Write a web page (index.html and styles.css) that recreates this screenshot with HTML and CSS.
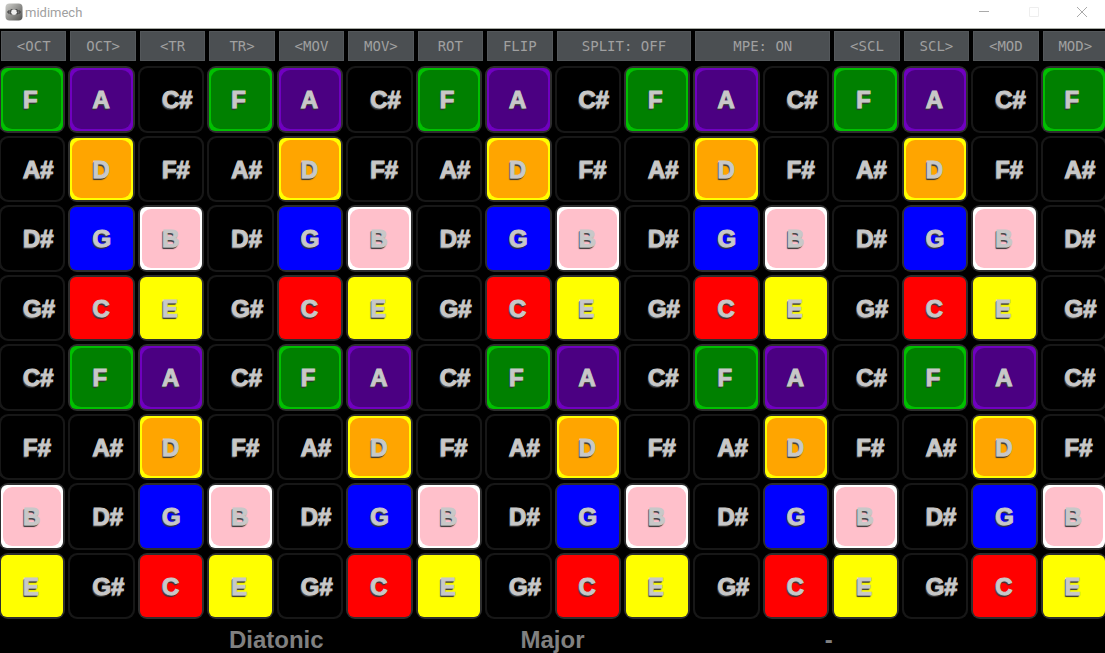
FILE: index.html
```html
<!DOCTYPE html>
<html lang="en">
<head>
<meta charset="utf-8">
<title>midimech</title>
<link rel="stylesheet" href="styles.css">
</head>
<body>
<header class="titlebar">
  <svg class="app-icon" viewBox="0 0 18 18" aria-hidden="true">
    <defs><linearGradient id="metal" x1="0" y1="0" x2="1" y2="1"><stop offset="0" stop-color="#d2d2ce"/><stop offset=".5" stop-color="#91918e"/><stop offset="1" stop-color="#50504e"/></linearGradient></defs>
    <rect x=".5" y=".5" width="17" height="17" rx="4" fill="url(#metal)"/>
    <path d="M2 9l2-2 1 1 1-2 2 1 1-1 1 1 2-1 1 2 1-1 2 2-2 2-1-1-1 2-2-1-1 1-1-1-2 1-1-2-1 1z" fill="#3a3a3a"/>
    <path d="M9 6l1 1h1.500v1.500l.8.700-.8 1v1.300H10l-1 .8-1-.8H6.500V10l-.8-.8.8-1V7H8z" fill="#eee"/>
    <path d="M3.500 9h2M12.500 9h2" stroke="#999"/>
  </svg>
  <h1 class="app-name">midimech</h1>
  <div class="window-controls">
    <button class="window-button" aria-label="Minimize"><svg viewBox="0 0 10 10"><path d="M0 4.500h10"/></svg></button>
    <button class="window-button" aria-label="Maximize" disabled><svg viewBox="0 0 10 10"><path d="M.5.5h9v9h-9z"/></svg></button>
    <button class="window-button" aria-label="Close"><svg viewBox="0 0 10 10"><path d="M0 0l10 10M10 0L0 10"/></svg></button>
  </div>
</header>
<main class="app">
  <nav class="toolbar" aria-label="Layout controls">
    <button class="tool">&lt;OCT</button>
    <button class="tool">OCT&gt;</button>
    <button class="tool">&lt;TR</button>
    <button class="tool">TR&gt;</button>
    <button class="tool">&lt;MOV</button>
    <button class="tool">MOV&gt;</button>
    <button class="tool">ROT</button>
    <button class="tool">FLIP</button>
    <button class="tool wide">SPLIT: OFF</button>
    <button class="tool wide">MPE: ON</button>
    <button class="tool">&lt;SCL</button>
    <button class="tool">SCL&gt;</button>
    <button class="tool">&lt;MOD</button>
    <button class="tool">MOD&gt;</button>
  </nav>
  <section class="pads" id="pads" aria-label="Note grid"></section>
  <footer class="status">
    <span>Diatonic</span>
    <span>Major</span>
    <span>-</span>
  </footer>
</main>
<script src="pads.js"></script>
</body>
</html>
```

FILE: styles.css
```css
* {
  box-sizing: border-box;
}

body {
  margin: 0;
  height: 100vh;
  display: flex;
  flex-direction: column;
  overflow: hidden;
  background: #000;
  font-family: "Liberation Sans", Arial, sans-serif;
}

button {
  border: 0;
  padding: 0;
  margin: 0;
  background: none;
}

.titlebar {
  display: flex;
  align-items: center;
  height: 29px;
  padding: 0 0 5px 5px;
  background: #fff;
  border-bottom: 1px solid #a9aca6;
}

.app-icon {
  width: 18px;
  height: 18px;
}

.app-name {
  margin: 0 auto 0 2px;
  padding-top: 1px;
  font: 400 13px Roboto, "Open Sans", sans-serif;
  color: #a0a0a0;
}

.window-controls {
  display: flex;
}

.window-button {
  display: grid;
  place-items: center;
  width: 50px;
  height: 24px;
}

.window-button:last-child {
  width: 46px;
}

.window-button svg {
  width: 10px;
  height: 10px;
  fill: none;
  stroke: #aaa;
  overflow: visible;
}

.window-button:disabled svg {
  stroke: #eee;
}

.app {
  flex: 1;
  display: flex;
  flex-direction: column;
  min-height: 0;
  overflow: hidden;
}

.toolbar {
  display: grid;
  grid-template-columns: repeat(16, minmax(0, 1fr));
  gap: 4px;
  margin: 2px -3px 5px 1px;
}

.tool {
  height: 30px;
  border: 1px solid #54585b;
  background: #4b4f52;
  color: #a0a0a0;
  font: 14px "DejaVu Sans Mono", monospace;
}

.wide {
  grid-column: span 2;
}

.pads {
  flex: 1;
  display: grid;
  grid-template-columns: repeat(16, minmax(0, 1fr));
  grid-template-rows: repeat(8, minmax(0, 1fr));
  gap: 3px;
  margin: 0 -2px 0 -1px;
  min-height: 0;
}

.pad {
  --edge: #000;
  --fill: #000;
  display: grid;
  padding: 2px;
  border-radius: 9px;
  background: #2e2e2e;
}

.edge {
  display: grid;
  padding: 2px;
  border-radius: 6px;
  background: var(--edge);
}

.face {
  display: flex;
  align-items: center;
  padding: 2px 0 0 20px;
  border-radius: 9px;
  background: var(--fill);
  color: #c8c8c8;
  font: 700 24px "Liberation Sans", Arial, sans-serif;
  -webkit-text-stroke: 1px #c8c8c8;
  text-shadow: -1px 1px 0 #555, -1px 2px 1px #333;
}

.sharp {
  background: #171717;
}

.sharp .edge {
  border-radius: 8px;
}

.note-a { --edge: #7000c0; --fill: #4b0082; }
.note-b { --edge: #fff; --fill: #ffc0cb; }
.note-c { --edge: #f00; --fill: #f00; }
.note-d { --edge: #ff0; --fill: #ffa500; }
.note-e { --edge: #ff0; --fill: #ff0; }
.note-f { --edge: #00c000; --fill: #008000; }
.note-g { --edge: #00f; --fill: #00f; }

.status {
  display: grid;
  grid-template-columns: repeat(3, 1fr);
  align-items: center;
  height: 34px;
  padding: 7px 12.5% 0;
  color: #808080;
  font-size: 24px;
  font-weight: 700;
  text-align: center;
}
```

FILE: pads.js
```js
const rows = [
  ["F", "A", "C#"],
  ["A#", "D", "F#"],
  ["D#", "G", "B"],
  ["G#", "C", "E"],
  ["C#", "F", "A"],
  ["F#", "A#", "D"],
  ["B", "D#", "G"],
  ["E", "G#", "C"]
];
const pads = document.getElementById("pads");
for (const row of rows) {
  for (let column = 0; column < 16; column++) {
    const note = row[column % 3];
    const pad = document.createElement("button");
    pad.className = "pad " + (note.length > 1 ? "sharp" : "note-" + note.toLowerCase());
    const edge = document.createElement("span");
    edge.className = "edge";
    const face = document.createElement("span");
    face.className = "face";
    face.textContent = note;
    edge.append(face);
    pad.append(edge);
    pads.append(pad);
  }
}
```
